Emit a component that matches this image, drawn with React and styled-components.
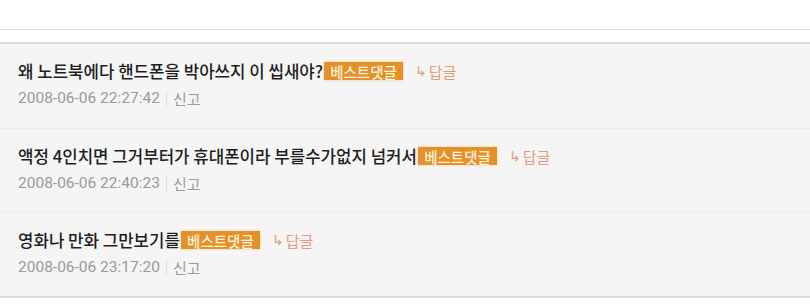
import React from "react";
import styled, { createGlobalStyle } from "styled-components";

const Global = createGlobalStyle`
  html, body { margin: 0; padding: 0; background: #fff; }
  body { font-family: "Roboto", "Noto Sans CJK KR", sans-serif; }
`;

const Page = styled.div`
  width: 810px;
  height: 304px;
  background: #fff;
  overflow: hidden;
`;

const TopBar = styled.div`
  height: 29px;
  border-bottom: 1px solid #dcdcdc;
`;

const Spacer = styled.div`
  height: 12px;
`;

const List = styled.ul`
  list-style: none;
  margin: 0;
  padding: 0;
  border-top: 2px solid #dadada;
  border-bottom: 2px solid #dadada;
  background: #f5f5f5;
`;

const Item = styled.li`
  height: 84px;
  box-sizing: border-box;
  padding: 16px 18px 0;
  display: flex;
  flex-direction: column;
  border-top: ${(p) => (p.$first ? "none" : "1px solid #ebebeb")};
`;

const TitleLine = styled.div`
  display: flex;
  align-items: center;
  height: 22px;
  font-family: "Noto Sans CJK KR", sans-serif;
  font-size: 16.8px;
  font-weight: 500;
  color: #1e1e1e;
  white-space: nowrap;
`;

const Badge = styled.span`
  display: inline-flex;
  align-items: center;
  justify-content: center;
  height: 18px;
  width: 79px;
  background: #e39128;
  color: #fdf0dc;
  font-family: "Noto Sans CJK KR", sans-serif;
  font-size: 14.5px;
  font-weight: 500;
  box-shadow: 0 0 2px rgba(240, 160, 60, 0.6);
  margin-left: 1px;
`;

const Reply = styled.span`
  display: inline-flex;
  align-items: center;
  margin-left: 12px;
  color: #e79a7c;
  font-family: "Noto Sans CJK KR", sans-serif;
  font-size: 15px;
  font-weight: 400;
`;

const Arrow = styled.span`
  font-family: "DejaVu Sans", sans-serif;
  font-size: 14px;
  margin-right: 2px;
`;

const MetaLine = styled.div`
  display: flex;
  align-items: center;
  height: 20px;
  margin-top: 6px;
  font-size: 15.5px;
  color: #9a9a9a;
`;

const Date = styled.span`
  font-family: "Roboto", sans-serif;
`;

const Divider = styled.span`
  display: inline-block;
  width: 1px;
  height: 15px;
  background: #dedede;
  margin: 0 6px 0 6px;
`;

const Report = styled.span`
  font-family: "Noto Sans CJK KR", sans-serif;
  font-size: 15px;
`;

const comments = [
  { text: "왜 노트북에다 핸드폰을 박아쓰지 이 씹새야?", date: "2008-06-06 22:27:42" },
  { text: "액정 4인치면 그거부터가 휴대폰이라 부를수가없지 넘커서", date: "2008-06-06 22:40:23" },
  { text: "영화나 만화 그만보기를", date: "2008-06-06 23:17:20" },
];

export default function App() {
  return (
    <Page>
      <Global />
      <TopBar />
      <Spacer />
      <List>
        {comments.map((c, i) => (
          <Item key={i} $first={i === 0}>
            <TitleLine>
              {c.text}
              <Badge>베스트댓글</Badge>
              <Reply>
                <Arrow>↳</Arrow>답글
              </Reply>
            </TitleLine>
            <MetaLine>
              <Date>{c.date}</Date>
              <Divider />
              <Report>신고</Report>
            </MetaLine>
          </Item>
        ))}
      </List>
    </Page>
  );
}
